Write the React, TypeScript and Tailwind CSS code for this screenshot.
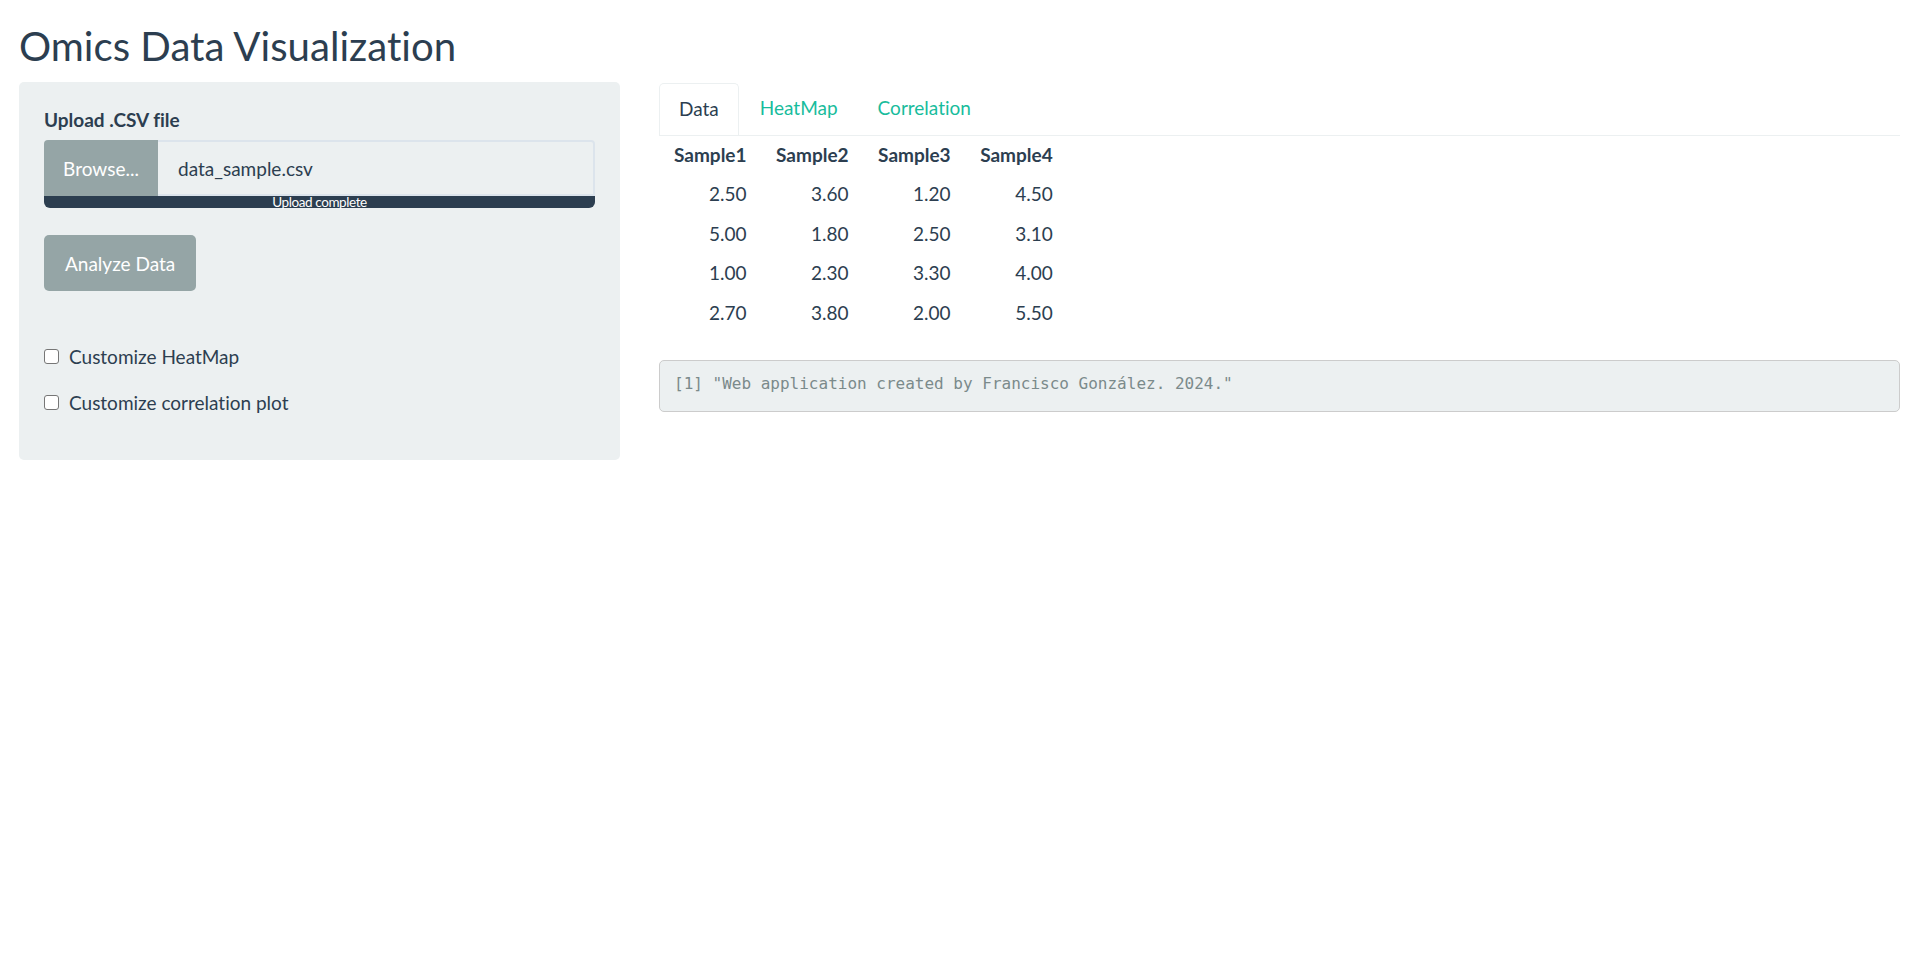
const rows = [
  ["2.50", "3.60", "1.20", "4.50"],
  ["5.00", "1.80", "2.50", "3.10"],
  ["1.00", "2.30", "3.30", "4.00"],
  ["2.70", "3.80", "2.00", "5.50"],
];

function CheckRow({ label }: { label: string }) {
  return (
    <label className="flex items-center gap-[10px] h-[46px]">
      <span className="w-[15px] h-[15px] rounded-[3px] border border-[#767676] bg-white shrink-0" />
      <span>{label}</span>
    </label>
  );
}

export default function App() {
  return (
    <div className="min-h-screen bg-white text-[#2c3e50] text-[19px] leading-[1.42857] pl-[19px] pr-[17px] font-['Lato','Liberation_Sans',sans-serif] [font-variant-ligatures:none]">
      {/* Title */}
      <h2 className="pt-[24px] pb-[14px] text-[40.2px] leading-[44px] font-normal">
        Omics Data Visualization
      </h2>

      <div className="grid grid-cols-[601px_1fr] gap-[39px] items-start">
        {/* Sidebar */}
        <div className="bg-[#ecf0f1] rounded-[5px] px-[25px] pt-[24px] pb-[35px]">
          <div className="font-bold mb-[7px]">Upload .CSV file</div>

          <div className="flex h-[56px]">
            <div className="w-[114px] bg-[#95a5a6] text-white flex items-center justify-center rounded-tl-[4px]">
              Browse...
            </div>
            <div className="flex-1 flex items-center px-[20px] border-2 border-l-0 border-[#dce4ec] rounded-tr-[4px]">
              data_sample.csv
            </div>
          </div>
          <div className="h-[12px] rounded-b-[6px] bg-[#2c3e50] flex items-center justify-center overflow-visible">
            <span className="text-white text-[13.5px] leading-[12px] tracking-[-0.4px]">Upload complete</span>
          </div>

          <button className="mt-[27px] h-[56px] px-[21px] bg-[#95a5a6] text-white rounded-[5px]">
            Analyze Data
          </button>

          <div className="mt-[42px]">
            <CheckRow label="Customize HeatMap" />
            <CheckRow label="Customize correlation plot" />
          </div>
        </div>

        {/* Main panel */}
        <div className="pt-[1px]">
          <div className="flex gap-[2px] border-b border-[#ecf0f1]">
            <div className="h-[52px] px-[19px] flex items-center bg-white border border-b-0 border-[#ecf0f1] rounded-t-[5px] -mb-[1px] pb-[2px]">
              Data
            </div>
            <div className="h-[52px] px-[19px] flex items-center text-[#18bc9c] pb-[2px]">HeatMap</div>
            <div className="h-[52px] px-[19px] flex items-center text-[#18bc9c] pb-[2px]">Correlation</div>
          </div>

          <table>
            <thead>
              <tr>
                {["Sample1", "Sample2", "Sample3", "Sample4"].map((h) => (
                  <th key={h} className="pl-[15px] pr-[14.5px] h-[38px] text-left font-bold">
                    {h}
                  </th>
                ))}
              </tr>
            </thead>
            <tbody>
              {rows.map((r, i) => (
                <tr key={i}>
                  {r.map((v, j) => (
                    <td key={j} className="pl-[15px] pr-[14.5px] h-[39.5px] text-right">
                      {v}
                    </td>
                  ))}
                </tr>
              ))}
            </tbody>
          </table>

          <pre className="mt-[28px] h-[52px] flex items-center px-[14px] pb-[4px] bg-[#ecf0f1] border border-[#cccccc] rounded-[5px] text-[#7b8a8b] text-[16px] font-['DejaVu_Sans_Mono',monospace]">
            [1] "Web application created by Francisco González. 2024."
          </pre>
        </div>
      </div>
    </div>
  );
}
